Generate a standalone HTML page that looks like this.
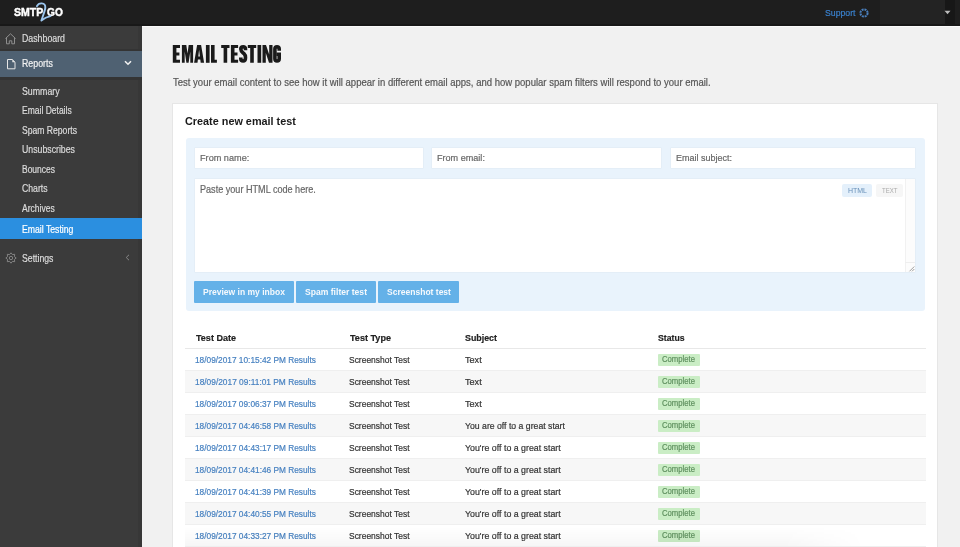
<!DOCTYPE html>
<html><head><meta charset="utf-8"><style>
html,body{margin:0;padding:0;width:960px;height:547px;overflow:hidden;background:#f1f1f1;}
body{position:relative;font-family:"Liberation Sans",sans-serif;}
.b{position:absolute;}
.t{position:absolute;white-space:nowrap;line-height:normal;transform-origin:0 0;-webkit-text-stroke:0.2px currentColor;}
</style></head><body>
<div class="b" style="left:0px;top:0px;width:960px;height:547px;background:#f1f1f1;"></div>
<div class="b" style="left:0px;top:0px;width:960px;height:26px;background:#1e1e1e;"></div>
<div class="b" style="left:880px;top:0px;width:65px;height:23.5px;background:#232323;"></div>
<div class="b" style="left:945px;top:0px;width:10px;height:26px;background:#171717;"></div>
<div class="b" style="left:0px;top:24px;width:960px;height:2px;background:#181818;"></div>
<div class="b" style="left:142px;top:26px;width:818px;height:1px;background:#fbfbfb;"></div>
<div class="b" style="left:0px;top:26px;width:142px;height:521px;background:#3b3b3b;"></div>
<div class="b" style="left:138px;top:26px;width:4px;height:521px;background:#373737;"></div>
<div class="b" style="left:0px;top:49px;width:142px;height:2px;background:#343434;"></div>
<div class="b" style="left:0px;top:51px;width:142px;height:25.5px;background:#4f6172;"></div>
<div class="b" style="left:0px;top:76.5px;width:142px;height:3px;background:#343434;"></div>
<div class="b" style="left:0px;top:218px;width:142px;height:21px;background:#2b8fe0;"></div>
<div class="t " style="left:13.50px;top:6.35px;font-size:11.00px;color:#fff;font-weight:bold;transform:scaleX(0.956);-webkit-text-stroke:0.45px #fff;">SMTP</div>
<div class="t " style="left:47.20px;top:6.35px;font-size:11.00px;color:#fff;font-weight:bold;transform:scaleX(0.923);-webkit-text-stroke:0.45px #fff;">GO</div>
<svg class="b" style="left:35px;top:0px" width="18" height="24" viewBox="0 0 18 24"><path d="M1.9 6.2 C3 3.9 5 3.3 6.8 3.4 C9 3.5 10.4 5.2 10.3 7.6 C10.2 10.5 8 15.3 6.4 20.6 C9 18.5 12 17 15.4 16.2" fill="none" stroke="#9cc6ee" stroke-width="1.9" stroke-linecap="round" stroke-linejoin="round"/></svg>
<div class="t " style="left:825.00px;top:6.93px;font-size:9.80px;color:#3a80cc;transform:scaleX(0.889);">Support</div>
<svg class="b" style="left:858.6px;top:7.6px" width="10" height="10" viewBox="0 0 10 10"><circle cx="5" cy="5" r="3.6" fill="none" stroke="#4a7fbc" stroke-width="2.0" stroke-dasharray="2.0 0.83"/><circle cx="5" cy="5" r="1.1" fill="#1e1e1e"/></svg>
<svg class="b" style="left:943.5px;top:9.5px" width="7" height="5" viewBox="0 0 7 5"><path d="M0.5 0.8H6.5L3.5 4.3Z" fill="#bbb"/></svg>
<div class="t " style="left:22.10px;top:33.39px;font-size:10.40px;color:#dcdcdc;transform:scaleX(0.845);">Dashboard</div>
<div class="t " style="left:22.00px;top:58.49px;font-size:10.40px;color:#f2f2f2;transform:scaleX(0.846);">Reports</div>
<div class="t " style="left:21.60px;top:85.79px;font-size:10.40px;color:#dcdcdc;transform:scaleX(0.847);">Summary</div>
<div class="t " style="left:21.60px;top:105.29px;font-size:10.40px;color:#dcdcdc;transform:scaleX(0.819);">Email Details</div>
<div class="t " style="left:21.60px;top:124.89px;font-size:10.40px;color:#dcdcdc;transform:scaleX(0.827);">Spam Reports</div>
<div class="t " style="left:21.60px;top:144.39px;font-size:10.40px;color:#dcdcdc;transform:scaleX(0.841);">Unsubscribes</div>
<div class="t " style="left:21.60px;top:163.99px;font-size:10.40px;color:#dcdcdc;transform:scaleX(0.815);">Bounces</div>
<div class="t " style="left:21.60px;top:183.29px;font-size:10.40px;color:#dcdcdc;transform:scaleX(0.836);">Charts</div>
<div class="t " style="left:21.60px;top:202.69px;font-size:10.40px;color:#dcdcdc;transform:scaleX(0.820);">Archives</div>
<div class="t " style="left:21.60px;top:223.21px;font-size:10.60px;color:#fff;transform:scaleX(0.819);">Email Testing</div>
<div class="t " style="left:21.60px;top:252.11px;font-size:10.60px;color:#dcdcdc;transform:scaleX(0.820);">Settings</div>
<svg class="b" style="left:5px;top:33px" width="11" height="12" viewBox="0 0 11 12"><path d="M0.5 5.5L5.5 0.8L10.5 5.5M1.5 4.6V10.8H4.3V7.8H6.8V10.8H9.5V4.6" fill="none" stroke="#8f8f8f" stroke-width="1"/></svg>
<svg class="b" style="left:6.5px;top:58.7px" width="9" height="11" viewBox="0 0 9 11"><path d="M0.5 0.5H5.3L8 3.2V9.8H0.5Z" fill="none" stroke="#e6e6e6" stroke-width="1"/><path d="M5.3 0.5V3.2H8Z" fill="#e6e6e6"/></svg>
<svg class="b" style="left:123.5px;top:60px" width="8" height="6" viewBox="0 0 8 6"><path d="M1 1.2L4 4.2L7 1.2" fill="none" stroke="#f0f0f0" stroke-width="1.6"/></svg>
<svg class="b" style="left:4.5px;top:251.8px" width="12" height="12" viewBox="0 0 12 12"><circle cx="6" cy="6" r="1.7" fill="none" stroke="#8a8a8a" stroke-width="0.9"/><path d="M6.00 0.80L7.42 2.58L9.68 2.32L9.42 4.58L11.20 6.00L9.42 7.42L9.68 9.68L7.42 9.42L6.00 11.20L4.58 9.42L2.32 9.68L2.58 7.42L0.80 6.00L2.58 4.58L2.32 2.32L4.58 2.58Z" fill="none" stroke="#8a8a8a" stroke-width="0.9" stroke-linejoin="round"/></svg>
<svg class="b" style="left:125px;top:254px" width="5" height="7" viewBox="0 0 5 7"><path d="M4 0.8L1.2 3.5L4 6.2" fill="none" stroke="#888" stroke-width="1"/></svg>
<svg class="b" style="left:172px;top:44px" width="112" height="20" viewBox="0 0 112 20"><g fill="#1a1a1a">
<path d="M0.8 1H8V4H4.4V8.4H7.4V11.4H4.4V15.8H8V18.8H0.8Z"/>
<path d="M9.9 18.8V1H14.3L15.5 9.5L16.7 1H21.1V18.8H18.3V7.5L16.6 18.8H14.4L12.7 7.5V18.8Z"/>
<path fill-rule="evenodd" d="M22.1 18.8L25.1 1H29.1L32.1 18.8H28.7L28.3 15.6H25.9L25.5 18.8ZM26.3 12.6H27.9L27.1 5.8Z"/>
<path d="M33.9 1H37.6V18.8H33.9Z"/>
<path d="M39 1H42.6V15.8H44.9V18.8H39Z"/>
<path d="M49.2 1H57.5V4H55.2V18.8H51.6V4H49.2Z"/>
<path d="M58.9 1H66.1V4H62.5V8.4H65.5V11.4H62.5V15.8H66.1V18.8H58.9Z"/>
<path d="M75.8 1H84.2V4H81.8V18.8H78.2V4H75.8Z"/>
<path d="M85.5 1H89.2V18.8H85.5Z"/>
<path d="M90.5 18.8V1H94L97.2 10.5V1H100.5V18.8H97L93.8 9V18.8Z"/>
</g><g fill="none" stroke="#1a1a1a" stroke-width="3.6">
<path d="M73.5 6.2V5C73.5 3.4 72.7 2.8 71.2 2.8C69.7 2.8 68.8 3.5 68.8 5C68.8 6.6 69.6 7.6 71 8.8L72 9.7C73.2 10.8 73.5 12 73.5 13.8C73.5 16 72.6 17 71.1 17C69.6 17 68.8 16.2 68.8 14.5V13.4"/>
<path d="M107.2 6.8V5C107.2 3.5 106.5 2.8 105 2.8C103.6 2.8 102.9 3.5 102.9 5V14.8C102.9 16.3 103.6 17 105 17C106.5 17 107.2 16.3 107.2 14.8V10.2H104.8"/>
</g></svg>
<div class="t " style="left:172.50px;top:76.03px;font-size:10.80px;color:#555;transform:scaleX(0.882);">Test your email content to see how it will appear in different email apps, and how popular spam filters will respond to your email.</div>
<div class="b" style="left:173px;top:103.5px;width:763.5px;height:443.5px;background:#fff;box-shadow:0 0 0 1px #e6e6e6;"></div>
<div class="t " style="left:185.00px;top:115.16px;font-size:11.20px;color:#1a1a1a;font-weight:bold;transform:scaleX(0.969);-webkit-text-stroke:0;">Create new email test</div>
<div class="b" style="left:185.5px;top:138.2px;width:739px;height:172.5px;background:#e9f3fc;border-radius:3px;"></div>
<div class="b" style="left:194.5px;top:147.6px;width:228px;height:20.5px;background:#fff;box-shadow:0 0 0 0.5px #dfe9f2;"></div>
<div class="t " style="left:199.70px;top:152.24px;font-size:9.90px;color:#666;transform:scaleX(0.926);">From name:</div>
<div class="b" style="left:432px;top:147.6px;width:228.5px;height:20.5px;background:#fff;box-shadow:0 0 0 0.5px #dfe9f2;"></div>
<div class="t " style="left:437.20px;top:152.24px;font-size:9.90px;color:#666;transform:scaleX(0.919);">From email:</div>
<div class="b" style="left:670.5px;top:147.6px;width:244.5px;height:20.5px;background:#fff;box-shadow:0 0 0 0.5px #dfe9f2;"></div>
<div class="t " style="left:675.70px;top:152.24px;font-size:9.90px;color:#666;transform:scaleX(0.909);">Email subject:</div>
<div class="b" style="left:194.5px;top:178.6px;width:720.5px;height:93.4px;background:#fff;box-shadow:0 0 0 0.5px #dfe9f2;"></div>
<div class="b" style="left:905px;top:178.6px;width:10px;height:93.4px;background:#fcfcfc;border-left:1px solid #f1f1f1;box-sizing:border-box;"></div>
<div class="t " style="left:199.50px;top:183.67px;font-size:10.20px;color:#666;transform:scaleX(0.892);">Paste your HTML code here.</div>
<div class="b" style="left:842.2px;top:183.9px;width:30px;height:12.7px;background:#e4f0fb;border-radius:2px;"></div>
<div class="b" style="left:876.4px;top:183.9px;width:26.2px;height:12.7px;background:#f6f6f6;border-radius:2px;"></div>
<div class="t " style="left:847.80px;top:186.06px;font-size:8.00px;color:#6890b8;transform:scaleX(0.872);-webkit-text-stroke:0;">HTML</div>
<div class="t " style="left:882.00px;top:186.06px;font-size:8.00px;color:#aaa;transform:scaleX(0.758);-webkit-text-stroke:0;">TEXT</div>
<div class="b" style="left:905px;top:262.4px;width:10px;height:1px;background:#eeeeee;"></div>
<svg class="b" style="left:905px;top:262px" width="10" height="10" viewBox="0 0 10 10"><path d="M9.3 4.5L4.5 9.3M9.3 7L7 9.3" stroke="#888" stroke-width="0.8"/></svg>
<div class="b" style="left:194px;top:281.25px;width:99.75px;height:21.25px;background:#64b1e8;border-radius:1px;"></div>
<div class="t " style="left:202.50px;top:286.38px;font-size:9.80px;color:#f5f9fd;font-weight:bold;transform:scaleX(0.870);-webkit-text-stroke:0;">Preview in my inbox</div>
<div class="b" style="left:295.6px;top:281.25px;width:80.3px;height:21.25px;background:#64b1e8;border-radius:1px;"></div>
<div class="t " style="left:304.60px;top:286.38px;font-size:9.80px;color:#f5f9fd;font-weight:bold;transform:scaleX(0.876);-webkit-text-stroke:0;">Spam filter test</div>
<div class="b" style="left:377.8px;top:281.25px;width:81px;height:21.25px;background:#64b1e8;border-radius:1px;"></div>
<div class="t " style="left:386.60px;top:286.38px;font-size:9.80px;color:#f5f9fd;font-weight:bold;transform:scaleX(0.870);-webkit-text-stroke:0;">Screenshot test</div>
<div class="t " style="left:195.50px;top:332.13px;font-size:9.80px;color:#222;font-weight:bold;transform:scaleX(0.922);">Test Date</div>
<div class="t " style="left:349.50px;top:332.13px;font-size:9.80px;color:#222;font-weight:bold;transform:scaleX(0.926);">Test Type</div>
<div class="t " style="left:465.40px;top:332.13px;font-size:9.80px;color:#222;font-weight:bold;transform:scaleX(0.904);">Subject</div>
<div class="t " style="left:657.70px;top:332.13px;font-size:9.80px;color:#222;font-weight:bold;transform:scaleX(0.885);">Status</div>
<div class="b" style="left:185px;top:348px;width:740.5px;height:1px;background:#e8e8e8;"></div>
<div class="t " style="left:194.80px;top:354.58px;font-size:9.30px;color:#4680c0;transform:scaleX(0.893);">18/09/2017 10:15:42 PM Results</div>
<div class="t " style="left:348.80px;top:354.58px;font-size:9.30px;color:#333;transform:scaleX(0.910);">Screenshot Test</div>
<div class="t " style="left:465.20px;top:354.58px;font-size:9.30px;color:#333;transform:scaleX(0.979);">Text</div>
<div class="b" style="left:657.7px;top:353.5px;width:42.2px;height:12.6px;background:#caedc5;border-radius:1px;"></div>
<div class="t " style="left:662.40px;top:355.18px;font-size:8.20px;color:#5f905f;transform:scaleX(0.940);">Complete</div>
<div class="b" style="left:185px;top:371px;width:740.5px;height:22px;background:#f7f7f7;"></div>
<div class="b" style="left:185px;top:370px;width:740.5px;height:1px;background:#efefef;"></div>
<div class="t " style="left:194.80px;top:376.58px;font-size:9.30px;color:#4680c0;transform:scaleX(0.898);">18/09/2017 09:11:01 PM Results</div>
<div class="t " style="left:348.80px;top:376.58px;font-size:9.30px;color:#333;transform:scaleX(0.910);">Screenshot Test</div>
<div class="t " style="left:465.20px;top:376.58px;font-size:9.30px;color:#333;transform:scaleX(0.979);">Text</div>
<div class="b" style="left:657.7px;top:375.5px;width:42.2px;height:12.6px;background:#caedc5;border-radius:1px;"></div>
<div class="t " style="left:662.40px;top:377.18px;font-size:8.20px;color:#5f905f;transform:scaleX(0.940);">Complete</div>
<div class="b" style="left:185px;top:392px;width:740.5px;height:1px;background:#efefef;"></div>
<div class="t " style="left:194.80px;top:398.58px;font-size:9.30px;color:#4680c0;transform:scaleX(0.893);">18/09/2017 09:06:37 PM Results</div>
<div class="t " style="left:348.80px;top:398.58px;font-size:9.30px;color:#333;transform:scaleX(0.910);">Screenshot Test</div>
<div class="t " style="left:465.20px;top:398.58px;font-size:9.30px;color:#333;transform:scaleX(0.979);">Text</div>
<div class="b" style="left:657.7px;top:397.5px;width:42.2px;height:12.6px;background:#caedc5;border-radius:1px;"></div>
<div class="t " style="left:662.40px;top:399.18px;font-size:8.20px;color:#5f905f;transform:scaleX(0.940);">Complete</div>
<div class="b" style="left:185px;top:415px;width:740.5px;height:22px;background:#f7f7f7;"></div>
<div class="b" style="left:185px;top:414px;width:740.5px;height:1px;background:#efefef;"></div>
<div class="t " style="left:194.80px;top:420.58px;font-size:9.30px;color:#4680c0;transform:scaleX(0.893);">18/09/2017 04:46:58 PM Results</div>
<div class="t " style="left:348.80px;top:420.58px;font-size:9.30px;color:#333;transform:scaleX(0.910);">Screenshot Test</div>
<div class="t " style="left:465.20px;top:420.58px;font-size:9.30px;color:#333;transform:scaleX(0.934);">You are off to a great start</div>
<div class="b" style="left:657.7px;top:419.5px;width:42.2px;height:12.6px;background:#caedc5;border-radius:1px;"></div>
<div class="t " style="left:662.40px;top:421.18px;font-size:8.20px;color:#5f905f;transform:scaleX(0.940);">Complete</div>
<div class="b" style="left:185px;top:436px;width:740.5px;height:1px;background:#efefef;"></div>
<div class="t " style="left:194.80px;top:442.58px;font-size:9.30px;color:#4680c0;transform:scaleX(0.893);">18/09/2017 04:43:17 PM Results</div>
<div class="t " style="left:348.80px;top:442.58px;font-size:9.30px;color:#333;transform:scaleX(0.910);">Screenshot Test</div>
<div class="t " style="left:465.20px;top:442.58px;font-size:9.30px;color:#333;transform:scaleX(0.948);">You're off to a great start</div>
<div class="b" style="left:657.7px;top:441.5px;width:42.2px;height:12.6px;background:#caedc5;border-radius:1px;"></div>
<div class="t " style="left:662.40px;top:443.18px;font-size:8.20px;color:#5f905f;transform:scaleX(0.940);">Complete</div>
<div class="b" style="left:185px;top:459px;width:740.5px;height:22px;background:#f7f7f7;"></div>
<div class="b" style="left:185px;top:458px;width:740.5px;height:1px;background:#efefef;"></div>
<div class="t " style="left:194.80px;top:464.58px;font-size:9.30px;color:#4680c0;transform:scaleX(0.893);">18/09/2017 04:41:46 PM Results</div>
<div class="t " style="left:348.80px;top:464.58px;font-size:9.30px;color:#333;transform:scaleX(0.910);">Screenshot Test</div>
<div class="t " style="left:465.20px;top:464.58px;font-size:9.30px;color:#333;transform:scaleX(0.948);">You're off to a great start</div>
<div class="b" style="left:657.7px;top:463.5px;width:42.2px;height:12.6px;background:#caedc5;border-radius:1px;"></div>
<div class="t " style="left:662.40px;top:465.18px;font-size:8.20px;color:#5f905f;transform:scaleX(0.940);">Complete</div>
<div class="b" style="left:185px;top:480px;width:740.5px;height:1px;background:#efefef;"></div>
<div class="t " style="left:194.80px;top:486.58px;font-size:9.30px;color:#4680c0;transform:scaleX(0.893);">18/09/2017 04:41:39 PM Results</div>
<div class="t " style="left:348.80px;top:486.58px;font-size:9.30px;color:#333;transform:scaleX(0.910);">Screenshot Test</div>
<div class="t " style="left:465.20px;top:486.58px;font-size:9.30px;color:#333;transform:scaleX(0.948);">You're off to a great start</div>
<div class="b" style="left:657.7px;top:485.5px;width:42.2px;height:12.6px;background:#caedc5;border-radius:1px;"></div>
<div class="t " style="left:662.40px;top:487.18px;font-size:8.20px;color:#5f905f;transform:scaleX(0.940);">Complete</div>
<div class="b" style="left:185px;top:503px;width:740.5px;height:22px;background:#f7f7f7;"></div>
<div class="b" style="left:185px;top:502px;width:740.5px;height:1px;background:#efefef;"></div>
<div class="t " style="left:194.80px;top:508.58px;font-size:9.30px;color:#4680c0;transform:scaleX(0.893);">18/09/2017 04:40:55 PM Results</div>
<div class="t " style="left:348.80px;top:508.58px;font-size:9.30px;color:#333;transform:scaleX(0.910);">Screenshot Test</div>
<div class="t " style="left:465.20px;top:508.58px;font-size:9.30px;color:#333;transform:scaleX(0.948);">You're off to a great start</div>
<div class="b" style="left:657.7px;top:507.5px;width:42.2px;height:12.6px;background:#caedc5;border-radius:1px;"></div>
<div class="t " style="left:662.40px;top:509.18px;font-size:8.20px;color:#5f905f;transform:scaleX(0.940);">Complete</div>
<div class="b" style="left:185px;top:524px;width:740.5px;height:1px;background:#efefef;"></div>
<div class="t " style="left:194.80px;top:530.58px;font-size:9.30px;color:#4680c0;transform:scaleX(0.893);">18/09/2017 04:33:27 PM Results</div>
<div class="t " style="left:348.80px;top:530.58px;font-size:9.30px;color:#333;transform:scaleX(0.910);">Screenshot Test</div>
<div class="t " style="left:465.20px;top:530.58px;font-size:9.30px;color:#333;transform:scaleX(0.948);">You're off to a great start</div>
<div class="b" style="left:657.7px;top:529.5px;width:42.2px;height:12.6px;background:#caedc5;border-radius:1px;"></div>
<div class="t " style="left:662.40px;top:531.18px;font-size:8.20px;color:#5f905f;transform:scaleX(0.940);">Complete</div>
<div class="b" style="left:185px;top:545.5px;width:740.5px;height:1px;background:#efefef;"></div>
<div class="b" style="left:185px;top:527px;width:680px;height:19px;background:linear-gradient(to bottom,rgba(0,0,0,0),rgba(0,0,0,0.035));-webkit-mask-image:linear-gradient(to right,#000 0%,#000 88%,transparent 100%);"></div>
</body></html>
